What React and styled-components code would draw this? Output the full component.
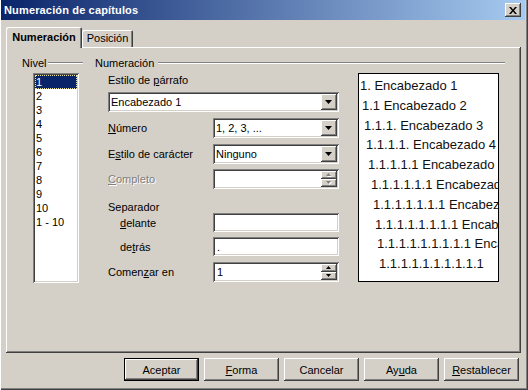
import React from 'react';
import styled, { createGlobalStyle } from 'styled-components';

const GlobalStyle = createGlobalStyle`
  html, body { margin: 0; padding: 0; background: #d4d0c8; }
  body { font-family: "Liberation Sans", Arial, sans-serif; font-size: 11px; color: #000; }
  * { box-sizing: border-box; }
`;

const raised = 'inset -1px -1px #404040, inset 1px 1px #ffffff, inset -2px -2px #808080';
const sunken = 'inset 1px 1px #808080, inset -1px -1px #ffffff, inset 2px 2px #404040, inset -2px -2px #d4d0c8';

const Window = styled.div`
  width: 528px;
  height: 390px;
  background: #d4d0c8;
  display: flex;
  flex-direction: column;
  padding: 0 3px 4px 1px;
  box-shadow: inset 1px 0 #ffffff, inset -1px -1px #404040, inset -2px -2px #808080;
  overflow: hidden;
`;

const TitleBar = styled.div`
  height: 20px;
  flex: none;
  display: flex;
  align-items: center;
  justify-content: space-between;
  padding: 0 4px 0 3px;
  background: linear-gradient(to right, #0a246a, #a6caf0);
`;

const TitleText = styled.span`
  color: #fff;
  font-weight: bold;
  font-size: 11px;
  letter-spacing: 0.15px;
`;

const CloseButton = styled.div`
  width: 16px;
  height: 14px;
  background: #d4d0c8;
  box-shadow: ${raised};
  display: flex;
  align-items: center;
  justify-content: center;
`;

const Body = styled.div`
  flex: 1;
  display: flex;
  flex-direction: column;
  padding: 7px 4px 0 5px;
`;

const TabRow = styled.div`
  display: flex;
  align-items: flex-end;
  height: 21px;
  margin-bottom: -1px;
  position: relative;
  z-index: 1;
`;

const Tab = styled.div`
  height: ${p => (p.$active ? 21 : 17)}px;
  width: ${p => p.$w}px;
  margin-bottom: ${p => (p.$active ? 0 : 1)}px;
  padding-top: ${p => (p.$active ? 3 : 1)}px;
  background: #d4d0c8;
  border-radius: 2px 2px 0 0;
  box-shadow: inset 1px 1px #ffffff, inset -1px 0 #404040, inset -2px 0 #808080;
  font-weight: ${p => (p.$active ? 'bold' : 'normal')};
  text-align: center;
  line-height: 14px;
`;

const Panel = styled.div`
  height: 306px;
  flex: none;
  display: flex;
  padding: 9px 0 0 16px;
  box-shadow: ${raised};
`;

const GroupHeader = styled.div`
  display: flex;
  align-items: center;
  height: 13px;
  white-space: nowrap;
`;

const GroupLine = styled.div`
  flex: 1;
  height: 2px;
  margin-left: ${p => p.$gap}px;
  border-top: 1px solid #808080;
  border-bottom: 1px solid #ffffff;
`;

const NivelCol = styled.div`
  width: 61px;
  display: flex;
  flex-direction: column;
`;

const NivelList = styled.div`
  margin: 4px 0 0 11px;
  width: 46px;
  height: 210px;
  background: #fff;
  box-shadow: ${sunken};
  padding: 2px;
`;

const ListItem = styled.div`
  height: 14px;
  line-height: 14px;
  padding-left: 1px;
  white-space: nowrap;
  background: ${p => (p.$sel ? '#0a246a' : 'transparent')};
  color: ${p => (p.$sel ? '#fff' : '#000')};
  outline: ${p => (p.$sel ? '1px dotted #e8e4a0' : 'none')};
  outline-offset: -1px;
`;

const NumCol = styled.div`
  width: 410px;
  margin-left: 12px;
  display: flex;
  flex-direction: column;
`;

const NumBody = styled.div`
  display: flex;
  margin-top: 4px;
  padding-left: 13px;
`;

const Form = styled.div`
  width: 231px;
  display: flex;
  flex-direction: column;
`;

const FieldRow = styled.div`
  display: flex;
  align-items: center;
  height: ${p => p.$h}px;
  margin-top: ${p => p.$mt}px;
`;

const FieldLabel = styled.span`
  width: ${p => 105 - (p.$indent || 0)}px;
  margin-left: ${p => p.$indent || 0}px;
  white-space: nowrap;
  color: ${p => (p.$disabled ? '#808080' : '#000')};
  text-shadow: ${p => (p.$disabled ? '1px 1px #ffffff' : 'none')};
`;

const Field = styled.div`
  width: ${p => p.$w}px;
  height: ${p => p.$h}px;
  background: #fff;
  box-shadow: ${sunken};
  display: flex;
  align-items: center;
  padding: 2px;
`;

const FieldText = styled.span`
  flex: 1;
  padding-left: ${p => p.$pl}px;
  white-space: nowrap;
  overflow: hidden;
`;

const DropButton = styled.div`
  width: 16px;
  height: 16px;
  background: #d4d0c8;
  box-shadow: ${raised};
  display: flex;
  align-items: center;
  justify-content: center;
`;

const SpinCol = styled.div`
  width: 16px;
  height: 16px;
  display: flex;
  flex-direction: column;
`;

const SpinButton = styled.div`
  flex: 1;
  background: #d4d0c8;
  box-shadow: ${raised};
  display: flex;
  align-items: center;
  justify-content: center;
`;

const Preview = styled.div`
  margin-left: 19px;
  width: 141px;
  height: 209px;
  background: #fff;
  border: 1px solid #000;
  padding-top: 2px;
  overflow: hidden;
`;

const PreviewLine = styled.div`
  white-space: nowrap;
  font-size: 13px;
  line-height: 19.8px;
  padding-left: ${p => p.$indent}px;
  color: #111;
`;

const ButtonRow = styled.div`
  display: flex;
  justify-content: flex-end;
  gap: 5px;
  margin-top: 5px;
  padding-right: 2px;
`;

const PushButton = styled.div`
  width: 75px;
  height: 23px;
  background: #d4d0c8;
  border: ${p => (p.$default ? '1px solid #000' : 'none')};
  box-shadow: ${raised};
  display: flex;
  align-items: center;
  justify-content: center;
`;

const Arrow = ({ up, disabled, w = 7, h = 4 }) => (
  <svg width={w + 1} height={h + 1} viewBox={`0 0 ${w + 1} ${h + 1}`}>
    {disabled && (
      <polygon
        points={up ? `1,${h + 1} ${w + 1},${h + 1} ${(w + 2) / 2},1` : `1,1 ${w + 1},1 ${(w + 2) / 2},${h + 1}`}
        fill="#fff"
      />
    )}
    <polygon
      points={up ? `0,${h} ${w},${h} ${w / 2},0` : `0,0 ${w},0 ${w / 2},${h}`}
      fill={disabled ? '#808080' : '#000'}
    />
  </svg>
);

const Combo = ({ w, children }) => (
  <Field $w={w} $h={20}>
    <FieldText $pl={1}>{children}</FieldText>
    <DropButton>
      <Arrow />
    </DropButton>
  </Field>
);

const Spin = ({ children, disabled }) => (
  <Field $w={126} $h={20}>
    <FieldText $pl={2}>{children}</FieldText>
    <SpinCol>
      <SpinButton>
        <Arrow up w={5} h={3} disabled={disabled} />
      </SpinButton>
      <SpinButton>
        <Arrow w={5} h={3} disabled={disabled} />
      </SpinButton>
    </SpinCol>
  </Field>
);

const levels = ['1', '2', '3', '4', '5', '6', '7', '8', '9', '10', '1 - 10'];

const previewLines = [
  '1. Encabezado 1',
  '1.1 Encabezado 2',
  '1.1.1. Encabezado 3',
  '1.1.1.1. Encabezado 4',
  '1.1.1.1.1 Encabezado 5',
  '1.1.1.1.1.1 Encabezado 6',
  '1.1.1.1.1.1.1 Encabezado 7',
  '1.1.1.1.1.1.1.1 Encabezado 8',
  '1.1.1.1.1.1.1.1.1 Encabezado 9',
  '1.1.1.1.1.1.1.1.1.1',
];

export default function App() {
  return (
    <>
      <GlobalStyle />
      <Window>
        <TitleBar>
          <TitleText>Numeración de capítulos</TitleText>
          <CloseButton>
            <svg width="8" height="7" viewBox="0 0 8 7">
              <path d="M0 0h2l2 2.5L6 0h2L5 3.5 8 7H6L4 4.5 2 7H0l3-3.5z" fill="#000" />
            </svg>
          </CloseButton>
        </TitleBar>
        <Body>
          <TabRow>
            <Tab $active $w={76}>Numeración</Tab>
            <Tab $w={51}>Posición</Tab>
          </TabRow>
          <Panel>
            <NivelCol>
              <GroupHeader>
                Nivel
                <GroupLine $gap={2} />
              </GroupHeader>
              <NivelList>
                {levels.map((l, i) => (
                  <ListItem key={l} $sel={i === 0}>{l}</ListItem>
                ))}
              </NivelList>
            </NivelCol>
            <NumCol>
              <GroupHeader>
                Numeración
                <GroupLine $gap={4} />
              </GroupHeader>
              <NumBody>
                <Form>
                  <FieldRow $h={13} $mt={0}>
                    <FieldLabel>Estilo de <u>p</u>árrafo</FieldLabel>
                  </FieldRow>
                  <FieldRow $h={20} $mt={6}>
                    <Combo w={231}>Encabezado 1</Combo>
                  </FieldRow>
                  <FieldRow $h={20} $mt={6}>
                    <FieldLabel><u>N</u>úmero</FieldLabel>
                    <Combo w={126}>1, 2, 3, ...</Combo>
                  </FieldRow>
                  <FieldRow $h={20} $mt={6}>
                    <FieldLabel>E<u>s</u>tilo de carácter</FieldLabel>
                    <Combo w={126}>Ninguno</Combo>
                  </FieldRow>
                  <FieldRow $h={20} $mt={5}>
                    <FieldLabel $disabled><u>C</u>ompleto</FieldLabel>
                    <Spin disabled />
                  </FieldRow>
                  <FieldRow $h={13} $mt={11}>
                    <FieldLabel>Separador</FieldLabel>
                  </FieldRow>
                  <FieldRow $h={19} $mt={0}>
                    <FieldLabel $indent={12}><u>d</u>elante</FieldLabel>
                    <Field $w={126} $h={19} />
                  </FieldRow>
                  <FieldRow $h={19} $mt={5}>
                    <FieldLabel $indent={12}>de<u>t</u>rás</FieldLabel>
                    <Field $w={126} $h={19}>
                      <FieldText $pl={2}>.</FieldText>
                    </Field>
                  </FieldRow>
                  <FieldRow $h={20} $mt={6}>
                    <FieldLabel>Comen<u>z</u>ar en</FieldLabel>
                    <Spin>1</Spin>
                  </FieldRow>
                </Form>
                <Preview>
                  {previewLines.map((t, i) => (
                    <PreviewLine key={i} $indent={1 + Math.round(i * 2.1)}>{t}</PreviewLine>
                  ))}
                </Preview>
              </NumBody>
            </NumCol>
          </Panel>
          <ButtonRow>
            <PushButton $default>Aceptar</PushButton>
            <PushButton><span><u>F</u>orma</span></PushButton>
            <PushButton>Cancelar</PushButton>
            <PushButton><span>Ay<u>u</u>da</span></PushButton>
            <PushButton><span><u>R</u>establecer</span></PushButton>
          </ButtonRow>
        </Body>
      </Window>
    </>
  );
}
